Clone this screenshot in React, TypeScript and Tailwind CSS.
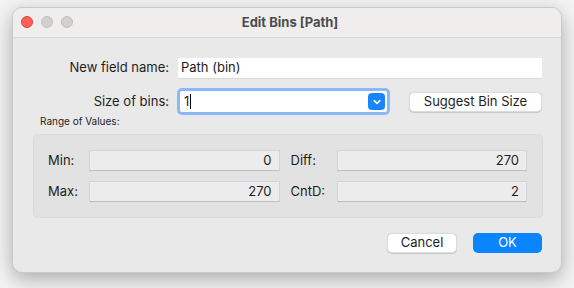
import React from "react";

const font = { fontFamily: "Inter, 'Liberation Sans', sans-serif" };

function ReadField({ value }: { value: string }) {
  return (
    <div className="h-[21px] flex-1 bg-[#ececec] border border-[#d4d4d4] border-b-[#bdbdbd] flex items-center justify-end pr-[7px] text-[13px] text-[#1e1e1e]">
      {value}
    </div>
  );
}

export default function App() {
  return (
    <div className="w-[574px] h-[288px] bg-[#f4f4f4] pl-[12px] pt-[7px]" style={font}>
      <div className="w-[550px] h-[266px] rounded-[10px] bg-[#e9e9e9] border border-[#c9c9c9] shadow-[0_6px_20px_rgba(0,0,0,0.3)] overflow-hidden flex flex-col">
        {/* title bar */}
        <div className="h-[30px] bg-[#efeeed] border-b border-[#d6d6d6] relative flex items-center justify-center">
          <div className="absolute left-[8px] top-[8px] flex gap-[8px]">
            <div className="w-[12px] h-[12px] rounded-full bg-[#fe5f57] border border-[#e0443e]" />
            <div className="w-[12px] h-[12px] rounded-full bg-[#d1d0cf] border border-[#bfbebd]" />
            <div className="w-[12px] h-[12px] rounded-full bg-[#d1d0cf] border border-[#bfbebd]" />
          </div>
          <div className="text-[13px] font-bold text-[#4c4c4c] ml-[6px]">Edit Bins [Path]</div>
        </div>

        {/* body */}
        <div className="flex flex-col pl-[20px] pr-[19px] pt-[19px]">
          <div className="flex items-center h-[22px]">
            <div className="w-[145px] shrink-0 text-right text-[13px] text-[#1e1e1e] pr-[9px]">New field name:</div>
            <div className="flex-1 h-[21px] bg-white border-b border-[#dadada] flex items-center pl-[3px] text-[13px] text-[#1e1e1e]">
              Path (bin)
            </div>
          </div>

          <div className="flex items-center h-[27px] mt-[9px]">
            <div className="w-[145px] shrink-0 text-right text-[13px] text-[#1e1e1e] pr-[9px]">Size of bins:</div>
            <div className="w-[213px] shrink-0 h-[27px] rounded-[5px] bg-[#8cb9f5] p-[3px] ml-[-1px]">
              <div className="w-full h-full bg-white rounded-[2px] flex items-center pl-[4px] pr-[2px]">
                <span className="text-[13px] text-[#1e1e1e]">1</span>
                <span className="w-[1px] h-[15px] bg-black ml-[1px]" />
                <div className="ml-auto w-[17px] h-[17px] rounded-[4px] bg-[#1a84ff] flex items-center justify-center">
                  <svg width="8" height="6" viewBox="0 0 8 6">
                    <path d="M1.2 1.6 L4 4.3 L6.8 1.6" stroke="white" strokeWidth="1.6" fill="none" strokeLinecap="round" strokeLinejoin="round" />
                  </svg>
                </div>
              </div>
            </div>
            <div className="ml-[19px] w-[133px] shrink-0 h-[20px] rounded-[5px] bg-white border border-[#dcdcdc] shadow-[0_0.5px_1px_rgba(0,0,0,0.15)] flex items-center justify-center text-[13px] text-[#1e1e1e]">
              Suggest Bin Size
            </div>
          </div>

          <div className="text-[10px] text-[#1e1e1e] mt-[0px] ml-[7px] leading-[13px]">Range of Values:</div>

          <div className="mt-[6px] w-[510px] h-[84px] rounded-[5px] bg-[#e2e2e2] border border-[#dadada] flex flex-col gap-[10px] pt-[15px] pl-[14px] pr-[15px]">
            <div className="flex items-center">
              <div className="w-[41px] text-[13px] text-[#1e1e1e]">Min:</div>
              <ReadField value="0" />
              <div className="w-[57px] pl-[11px] text-[13px] text-[#1e1e1e]">Diff:</div>
              <ReadField value="270" />
            </div>
            <div className="flex items-center">
              <div className="w-[41px] text-[13px] text-[#1e1e1e]">Max:</div>
              <ReadField value="270" />
              <div className="w-[57px] pl-[11px] text-[13px] text-[#1e1e1e]">CntD:</div>
              <ReadField value="2" />
            </div>
          </div>

          <div className="flex justify-end gap-[16px] mt-[15px]">
            <div className="w-[70px] h-[20px] rounded-[5px] bg-white border border-[#dcdcdc] shadow-[0_0.5px_1px_rgba(0,0,0,0.15)] flex items-center justify-center text-[13px] text-[#1e1e1e]">
              Cancel
            </div>
            <div className="w-[69px] h-[20px] rounded-[5px] bg-[#0a84ff] flex items-center justify-center text-[13px] text-white">
              OK
            </div>
          </div>
        </div>
      </div>
    </div>
  );
}
